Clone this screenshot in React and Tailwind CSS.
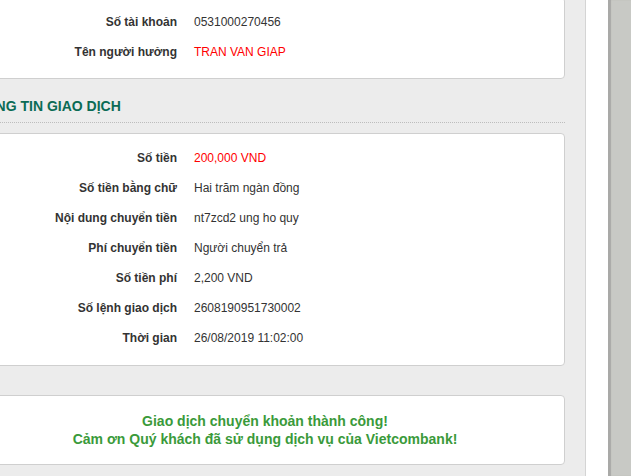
import React from "react";

const Row = ({ label, value, red }) => (
  <>
    <div className="h-[30px] flex items-center justify-end font-bold text-[#333]">{label}</div>
    <div className={"h-[30px] flex items-center " + (red ? "text-[#ff0000]" : "text-[#333]")}>{value}</div>
  </>
);

export default function App() {
  return (
    <div
      className="flex h-[476px] w-[631px] overflow-hidden bg-white text-[12px]"
      style={{ fontFamily: '"Liberation Sans", Arial, sans-serif' }}
    >
      <div className="w-[586px] shrink-0 bg-[#ececec] border-r border-[#d4d4d4] overflow-hidden">
        <div className="ml-[-35px] w-[600px]">
          <div className="mt-[-3px] bg-white border border-[#cfcfcf] rounded-[4px] pt-[9px] pb-[11px] grid grid-cols-[211px_1fr] gap-x-[17px]">
            <Row label="Số tài khoản" value="0531000270456" />
            <Row label="Tên người hưởng" value="TRAN VAN GIAP" red />
          </div>
          <div className="mt-[17px] pb-[6px] border-b border-dotted border-[#bdbdbd]">
            <div className="h-[20px] leading-[20px] text-[14px] font-bold text-[#0b6b55] pl-[1px]">
              THÔNG TIN GIAO DỊCH
            </div>
          </div>
          <div className="mt-[10px] bg-white border border-[#cfcfcf] rounded-[4px] pt-[9px] pb-[12px] grid grid-cols-[211px_1fr] gap-x-[17px]">
            <Row label="Số tiền" value="200,000 VND" red />
            <Row label="Số tiền bằng chữ" value="Hai trăm ngàn đồng" />
            <Row label="Nội dung chuyển tiền" value="nt7zcd2 ung ho quy" />
            <Row label="Phí chuyển tiền" value="Người chuyển trả" />
            <Row label="Số tiền phí" value="2,200 VND" />
            <Row label="Số lệnh giao dịch" value="2608190951730002" />
            <Row label="Thời gian" value="26/08/2019 11:02:00" />
          </div>
          <div className="mt-[29px] bg-white border border-[#cfcfcf] rounded-[4px] py-[16px] text-center text-[14px] leading-[18px] font-bold text-[#3a9a3a]">
            <div>Giao dịch chuyển khoản thành công!</div>
            <div>Cảm ơn Quý khách đã sử dụng dịch vụ của Vietcombank!</div>
          </div>
        </div>
      </div>
      <div className="w-[22px] shrink-0 bg-white" />
      <div className="flex-1 bg-[#c8c9c5] shadow-[inset_3px_0_1px_#a9a9a7]" />
    </div>
  );
}
